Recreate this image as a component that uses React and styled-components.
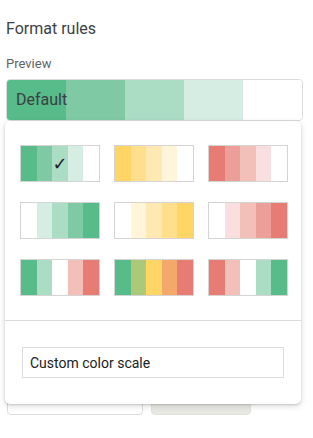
import React from "react";
import styled, { createGlobalStyle } from "styled-components";

const GlobalStyle = createGlobalStyle`
    body {
        margin: 0;
        background: #fff;
        font-family: Roboto, "Liberation Sans", Arial, sans-serif;
    }
`;

const SCALES = [
    ["#57bb8a", "#7fcaa5", "#abdcc4", "#d5ede2", "#ffffff"],
    ["#ffd666", "#ffdf8b", "#ffe9b2", "#fff5d9", "#ffffff"],
    ["#e67c73", "#ec9e98", "#f2bfb9", "#f9dfdf", "#ffffff"],
    ["#ffffff", "#d5ede2", "#abdcc4", "#7fcaa5", "#57bb8a"],
    ["#ffffff", "#fff5d9", "#ffe9b2", "#ffdf8b", "#ffd666"],
    ["#ffffff", "#f9dfdf", "#f2bfb9", "#ec9e98", "#e67c73"],
    ["#57bb8a", "#abdcc4", "#ffffff", "#f2bfb9", "#e67c73"],
    ["#57bb8a", "#abc978", "#ffd666", "#f3a96c", "#e67c73"],
    ["#e67c73", "#f2bfb9", "#ffffff", "#abdcc4", "#57bb8a"],
];

const App = () => {
    return (
        <>
            <GlobalStyle />
            <Pagina>
                <Titulo>Format rules</Titulo>
                <Etiqueta>Preview</Etiqueta>
                <Vista>
                    {SCALES[0].map((c, i) => (
                        <Segmento key={i} color={c} />
                    ))}
                    <TextoVista>Default</TextoVista>
                </Vista>
                <Botones>
                    <Boton />
                    <Boton gris />
                </Botones>

                <Menu>
                    <Grilla>
                        {SCALES.map((escala, i) => (
                            <Muestra key={i}>
                                {escala.map((c, j) => (
                                    <Celda key={j} color={c}>
                                        {i === 0 && j === 2 ? "✓" : null}
                                    </Celda>
                                ))}
                            </Muestra>
                        ))}
                    </Grilla>
                    <Separador />
                    <Personalizado>Custom color scale</Personalizado>
                </Menu>
            </Pagina>
        </>
    );
};

export default App;

const Pagina = styled.div`
    position: relative;
    width: 313px;
    height: 438px;
    padding: 19px 12px 0 6px;
    box-sizing: border-box;
`;

const Titulo = styled.div`
    font-size: 16px;
    font-weight: 400;
    color: #3c4043;
    line-height: 19px;
`;

const Etiqueta = styled.div`
    margin-top: 18px;
    font-size: 13px;
    color: #5f6368;
    line-height: 16px;
`;

const Vista = styled.div`
    position: relative;
    margin-top: 7px;
    width: 295px;
    height: 40px;
    display: flex;
    border: 1px solid #dadce0;
    border-radius: 4px;
    overflow: hidden;
`;

const Segmento = styled.div`
    flex: 1;
    background: ${(p) => p.color};
`;

const TextoVista = styled.span`
    position: absolute;
    left: 9px;
    top: 10px;
    font-size: 16px;
    line-height: 19px;
    color: #3c4043;
`;

const Botones = styled.div`
    display: flex;
    gap: 8px;
    margin-top: 258px;
    padding-left: 1px;
`;

const Boton = styled.div`
    width: ${(p) => (p.gris ? "100px" : "136px")};
    height: 36px;
    box-sizing: border-box;
    border: 1px solid ${(p) => (p.gris ? "#e2e2dd" : "#dadce0")};
    border-radius: 4px;
    background: ${(p) => (p.gris ? "#e8e8e3" : "#fff")};
`;

const Menu = styled.div`
    position: absolute;
    top: 121px;
    left: 5px;
    width: 296px;
    height: 283px;
    box-sizing: border-box;
    background: #fff;
    border-radius: 5px;
    box-shadow: 0 2px 6px rgba(60, 64, 67, 0.18), 0 1px 2px rgba(60, 64, 67, 0.2);
    padding-top: 24px;
`;

const Grilla = styled.div`
    display: grid;
    grid-template-columns: repeat(3, 80px);
    column-gap: 14px;
    row-gap: 20px;
    padding-left: 15px;
`;

const Muestra = styled.div`
    display: flex;
    height: 37px;
    box-sizing: border-box;
    border: 1px solid #d4d4d4;
`;

const Celda = styled.div`
    flex: 1;
    background: ${(p) => p.color};
    display: flex;
    align-items: center;
    justify-content: center;
    font-size: 18px;
    font-weight: 700;
    font-family: "DejaVu Sans", sans-serif;
    color: #202124;
`;

const Separador = styled.div`
    margin-top: 24px;
    height: 1px;
    background: #dadce0;
`;

const Personalizado = styled.div`
    margin: 26px 0 0 17px;
    width: 262px;
    height: 31px;
    box-sizing: border-box;
    border: 1px solid #dadce0;
    padding-left: 7px;
    display: flex;
    align-items: center;
    font-size: 14px;
    color: #202124;
`;
